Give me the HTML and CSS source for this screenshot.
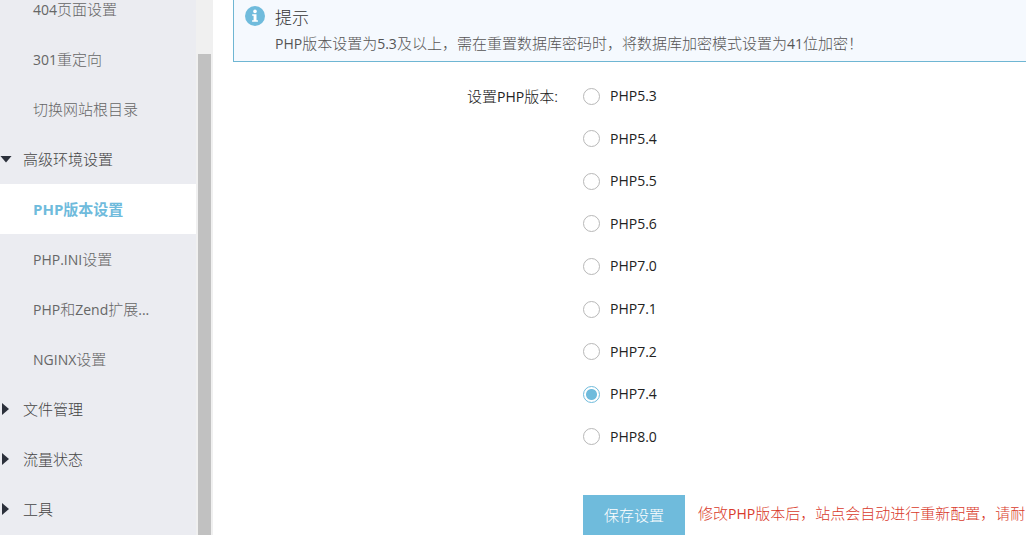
FILE: index.html
```html
<!DOCTYPE html>
<html lang="zh-CN">
<head>
<meta charset="utf-8">
<title>PHP版本设置</title>
<link rel="stylesheet" href="styles.css">
</head>
<body>
<div class="layout">
  <nav class="sidebar">
    <ul class="menu">
      <li><a class="item sub" href="#"><span class="latin">404</span>页面设置</a></li>
      <li><a class="item sub" href="#"><span class="latin">301</span>重定向</a></li>
      <li><a class="item sub" href="#">切换网站根目录</a></li>
      <li><a class="item group open" href="#">高级环境设置</a></li>
      <li><a class="item sub active" href="#"><span class="latin">PHP</span>版本设置</a></li>
      <li><a class="item sub" href="#"><span class="latin">PHP.INI</span>设置</a></li>
      <li><a class="item sub" href="#"><span class="latin">PHP</span>和<span class="latin">Zend</span>扩展<span class="latin">...</span></a></li>
      <li><a class="item sub" href="#"><span class="latin">NGINX</span>设置</a></li>
      <li><a class="item group" href="#">文件管理</a></li>
      <li><a class="item group" href="#">流量状态</a></li>
      <li><a class="item group" href="#">工具</a></li>
    </ul>
  </nav>
  <div class="scroll-track"><div class="scroll-thumb"></div></div>
  <main class="content">
    <section class="notice">
      <svg class="notice-icon" viewBox="0 0 20 20" aria-hidden="true">
        <circle cx="10" cy="10" r="10" fill="#6fbbdc"/>
        <circle cx="10" cy="5.4" r="1.8" fill="#fff"/>
        <path d="M7.2 8.2h4.3v6h1.4v1.6H7.1v-1.6h1.5V9.8H7.2z" fill="#fff"/>
      </svg>
      <div>
        <h1 class="notice-title">提示</h1>
        <p class="notice-text"><span class="latin">PHP</span>版本设置为<span class="latin">5.3</span>及以上，需在重置数据库密码时，将数据库加密模式设置为<span class="latin">41</span>位加密！</p>
      </div>
    </section>
    <form class="form">
      <div class="field" role="radiogroup" aria-labelledby="version-label">
        <span class="field-label" id="version-label">设置<span class="latin">PHP</span>版本:</span>
        <div class="options">
          <label class="option"><input type="radio" name="php" value="5.3">PHP5.3</label>
          <label class="option"><input type="radio" name="php" value="5.4">PHP5.4</label>
          <label class="option"><input type="radio" name="php" value="5.5">PHP5.5</label>
          <label class="option"><input type="radio" name="php" value="5.6">PHP5.6</label>
          <label class="option"><input type="radio" name="php" value="7.0">PHP7.0</label>
          <label class="option"><input type="radio" name="php" value="7.1">PHP7.1</label>
          <label class="option"><input type="radio" name="php" value="7.2">PHP7.2</label>
          <label class="option"><input type="radio" name="php" value="7.4" checked>PHP7.4</label>
          <label class="option"><input type="radio" name="php" value="8.0">PHP8.0</label>
        </div>
      </div>
      <div class="actions">
        <button class="save" type="button">保存设置</button>
        <span class="warning">修改<span class="latin">PHP</span>版本后，站点会自动进行重新配置，请耐</span>
      </div>
    </form>
  </main>
</div>
</body>
</html>
```
FILE: styles.css
```css
* { box-sizing: border-box; }

body {
  margin: 0;
  background: #fff;
  color: #222;
  font: 300 15px/20px "Noto Sans CJK SC", sans-serif;
}

.latin {
  font-family: "Open Sans", "Noto Sans CJK SC", sans-serif;
  font-size: 14px;
  font-weight: 400;
  line-height: 1;
}

.layout {
  display: flex;
  height: 100vh;
  overflow: hidden;
}

.sidebar {
  flex: 0 0 196px;
  background: #ebecf1;
  overflow: hidden;
}

.menu {
  list-style: none;
  margin: -16px 0 0;
  padding: 0;
}

.item {
  display: flex;
  align-items: center;
  height: 50px;
  color: #666;
  text-decoration: none;
  white-space: nowrap;
}

.sub {
  display: block;
  padding-left: 33px;
  line-height: 50px;
}

.group { color: #444; }

.group::before {
  content: "";
  width: 7px;
  height: 12px;
  margin: 0 14px 0 2px;
  background: #2b303b;
  clip-path: polygon(0 0, 100% 50%, 0 100%);
}

.group.open::before {
  width: 12px;
  height: 7px;
  margin: 0 11px 0 0;
  clip-path: polygon(0 0, 100% 0, 50% 100%);
}

.active,
.active .latin {
  font-weight: 700;
}

.active .latin { font-size: 15px; }

.active {
  background: #fff;
  color: #6fbbdc;
}

.scroll-track {
  flex: 0 0 17px;
  padding: 54px 2px 0;
  background: #f0f0f0;
}

.scroll-thumb {
  height: 100%;
  background: #c1c1c1;
}

.content {
  flex: 1;
  min-width: 0;
  padding-left: 20px;
}

.notice {
  display: flex;
  gap: 10px;
  padding: 6px 0 8px 11px;
  border: solid #6fb6d3;
  border-width: 0 0 1px 1px;
  background: #f5f9fe;
}

.notice-icon {
  flex: none;
  width: 20px;
  height: 20px;
}

.notice-title {
  margin: 0 0 6px;
  color: #333;
  font-size: 17px;
  font-weight: 300;
  line-height: 21px;
}

.notice-text {
  margin: 0;
  color: #555;
}

.form { padding-top: 13px; }

.field {
  display: grid;
  grid-template-columns: 325px 1fr;
  column-gap: 25px;
}

.field-label {
  padding-top: 11px;
  text-align: right;
}

.options {
  display: grid;
  grid-auto-rows: 1fr;
  justify-items: start;
  height: 383px;
}

.option {
  display: flex;
  align-items: center;
  gap: 10px;
  font-family: "Open Sans", sans-serif;
  font-size: 14px;
  font-weight: 400;
}

.option input {
  appearance: none;
  width: 17px;
  height: 17px;
  margin: 0;
  border: 1px solid #b8b8b8;
  border-radius: 50%;
  background: #fff;
}

.option input:checked {
  border-color: #6fbbdc;
  background: radial-gradient(circle, #6fbbdc 5px, #fff 6px);
}

.actions {
  display: flex;
  align-items: center;
  gap: 13px;
  margin-top: 37px;
  padding-left: 350px;
  white-space: nowrap;
}

.save {
  flex: none;
  width: 102px;
  height: 40px;
  padding: 0;
  border: 0;
  background: #6fbbdc;
  color: #fff;
  font: inherit;
}

.warning {
  padding-bottom: 4px;
  color: #d93a2b;
}
```
